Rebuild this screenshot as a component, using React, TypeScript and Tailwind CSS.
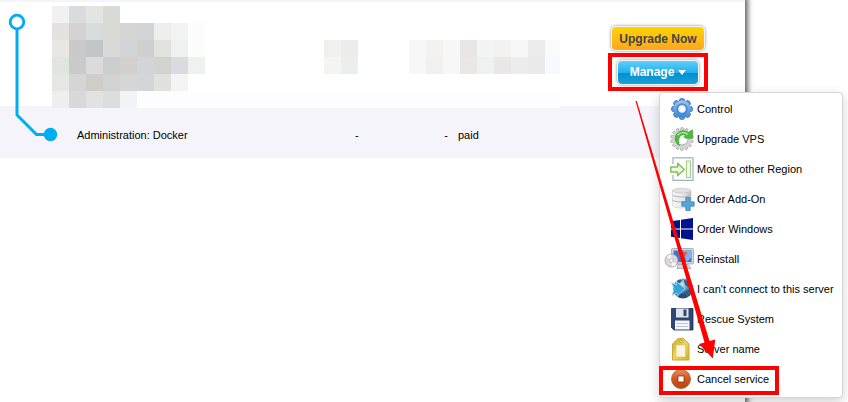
import { ReactNode } from 'react';

const CELL = 17;

// [column, row, colour]
const redacted: [number, number, string][] = [
  [0, 0, '#f1f1f1'], [1, 0, '#dadbde'], [2, 0, '#e3e5e3'], [3, 0, '#d8dad6'],
  [0, 1, '#e3e2de'], [1, 1, '#d4d2d3'], [2, 1, '#d9dcda'], [3, 1, '#d9d9d7'], [4, 1, '#d5d5d5'],
  [5, 1, '#d3d4d6'], [6, 1, '#eeeeee'], [7, 1, '#f3f3f3'], [8, 1, '#fcfcfc'],
  [0, 2, '#e8e7e5'], [1, 2, '#c9c9c9'], [2, 2, '#c3c5c7'], [3, 2, '#d9d9d9'], [4, 2, '#d3d4d7'],
  [5, 2, '#cfcfcf'], [6, 2, '#e1e1df'], [7, 2, '#eef1f0'], [8, 2, '#fcfcf9'],
  [0, 3, '#e1e5e1'], [1, 3, '#cacaca'], [2, 3, '#dbdbdb'], [3, 3, '#cbcecd'], [4, 3, '#d3cfce'],
  [5, 3, '#d3d4d7'], [6, 3, '#d1d3d1'], [7, 3, '#dadbde'], [8, 3, '#eff1f0'],
  [0, 4, '#e6e6e4'], [1, 4, '#d5d5d5'], [2, 4, '#cecdca'], [3, 4, '#d2d2d2'], [4, 4, '#d6d6d6'],
  [5, 4, '#d4d5d7'], [6, 4, '#e0e0de'], [7, 4, '#f4f4f4'],
  [0, 5, '#eeeeee'], [1, 5, '#d8d8d8'], [2, 5, '#e2e2e2'], [3, 5, '#dcdedd'], [4, 5, '#f2f3f6'],
  [16, 2, '#f0f0ee'], [17, 2, '#ececec'], [16, 3, '#f4f4f2'], [17, 3, '#eaeeec'],
  [21, 2, '#f7f7f7'], [22, 2, '#f4f2f0'], [23, 2, '#f7f7f7'], [24, 2, '#e8e6e4'], [25, 2, '#f1f4f3'],
  [26, 2, '#f2f2f0'], [27, 2, '#f7f7f7'], [28, 2, '#ebebeb'], [29, 2, '#f9fbfa'],
  [21, 3, '#f7f7f7'], [22, 3, '#f0f0f1'], [23, 3, '#f7f7f7'], [24, 3, '#eae8e6'], [25, 3, '#edf1ef'],
  [26, 3, '#eae8e7'], [27, 3, '#ececec'], [28, 3, '#eaeaea'], [29, 3, '#f7f9fc'],
];

const Redacted = () => (
  <svg className="relative block" width="508" height="102" shapeRendering="crispEdges" aria-hidden="true">
    <rect x={CELL * 5} y={CELL * 5} width="423" height={CELL} fill="#fdfdfd" />
    {redacted.map(([col, row, fill]) => (
      <rect key={`${col}-${row}`} x={col * CELL} y={row * CELL} width={CELL} height={CELL} fill={fill} />
    ))}
  </svg>
);

const Icon = ({ children }: { children: ReactNode }) => (
  <svg className="shrink-0 overflow-visible" width="24" height="24" viewBox="0 0 24 24" aria-hidden="true">
    {children}
  </svg>
);

const teeth = (count: number) => Array.from({ length: count }, (_, i) => (i * 360) / count);

const ControlIcon = () => (
  <Icon>
    <defs>
      <linearGradient id="gear-blue" x1="0" y1="0" x2="0" y2="1">
        <stop offset="0" stopColor="#a3c8ee" />
        <stop offset="0.5" stopColor="#6ba6e2" />
        <stop offset="1" stopColor="#2f86e0" />
      </linearGradient>
    </defs>
    <g fill="#5b97d8" stroke="#3a72b8" strokeWidth="0.9">
      {teeth(8).map((a) => (
        <rect key={a} x="9.3" y="1.5" width="5.4" height="6" rx="2.4" transform={`rotate(${a} 12 12)`} />
      ))}
    </g>
    <circle cx="12" cy="12" r="8.6" fill="url(#gear-blue)" />
    <circle cx="12" cy="12" r="5" fill="none" stroke="#4a88cf" strokeWidth="1.4" />
    <circle cx="12" cy="12" r="3.4" fill="#fff" stroke="#d5e5f6" strokeWidth="0.8" />
  </Icon>
);

const UpgradeIcon = () => (
  <Icon>
    <g fill="#d8d8d8" stroke="#8f8f8f" strokeWidth="0.6">
      {teeth(14).map((a) => (
        <rect key={a} x="10.8" y="0.6" width="2.6" height="5" rx="1" transform={`rotate(${a} 12 12)`} />
      ))}
    </g>
    <circle cx="12" cy="12" r="7.6" fill="#fff" stroke="#d4d4d4" strokeWidth="3.2" />
    <circle cx="12" cy="12" r="6" fill="#fff" stroke="#8d8d8d" strokeWidth="0.7" />
    <path d="M9.500 18.500C4.400 16 3.500 8.500 8.500 5.200c4-2.600 7.600-1.400 9.700.3L22.500 2.800v8.400h-9.300l2.300-2.600c-2-1.400-4.600-.9-5.800 1.200-1.500 2.600-1.200 6 -.2 8.700z" fill="#4fbd3a" stroke="#2f9a28" strokeWidth="0.6" />
    <path d="M7.500 8.200c2.600-3.400 7-3.200 10.300-.8" fill="none" stroke="#a9e69b" strokeWidth="1.500" />
    <circle cx="12.600" cy="13.200" r="3" fill="#fff" />
  </Icon>
);

const MoveIcon = () => (
  <Icon>
    <path d="M3 7V.8h20v22.500H3V18" fill="#fdfefe" stroke="#9db3bd" strokeWidth="1.200" />
    <rect x="16.500" y="4" width="4" height="16.500" fill="#f1f8e8" stroke="#a5cf86" />
    <path d="M.8 10h6.800V6.200l6.700 6.300-6.700 6.300V15H.8z" fill="#eef7e2" stroke="#86bd56" strokeWidth="1.500" strokeLinejoin="round" />
  </Icon>
);

const AddOnIcon = () => (
  <Icon>
    <defs>
      <linearGradient id="disk-grey">
        <stop offset="0" stopColor="#f5f5f5" />
        <stop offset="0.6" stopColor="#e8e8e8" />
        <stop offset="1" stopColor="#bdbdbd" />
      </linearGradient>
    </defs>
    <path d="M2.500 3.500v15c0 3.400 18.500 3.400 18.500 0v-15z" fill="url(#disk-grey)" stroke="#c8c8c8" strokeWidth="0.6" />
    <ellipse cx="11.700" cy="3.600" rx="9.200" ry="2.400" fill="#e2e2e2" stroke="#c0c0c0" strokeWidth="0.6" />
    <path d="M2.500 8c2 2.600 16.500 2.600 18.500 0M2.500 13c2 2.600 16.500 2.600 18.500 0" fill="none" stroke="#b4b4b4" />
    <path d="M15.800 10.500h4.400v4.300h4v4.400h-4v4.300h-4.400v-4.300h-4v-4.400h4z" fill="#55a5d8" stroke="#3580b5" strokeWidth="0.7" />
  </Icon>
);

const WindowsIcon = () => (
  <Icon>
    <path d="M1 4.300 10 3v8.500H1zM11 2.800 23 1v10.500H11zM1 12.500h9V21l-9-1.300zM11 12.500h12V23l-12-1.800z" fill="#00138a" />
  </Icon>
);

const ReinstallIcon = () => (
  <Icon>
    <rect x="1.500" y="1.500" width="22" height="15.500" rx="1" fill="#d2d5da" stroke="#9a9ea5" strokeWidth="0.7" />
    <rect x="3.500" y="3.500" width="18" height="11.500" fill="#3c78cd" />
    <path d="M13 3.500h8.500v7l-5 4.500z" fill="#86b2e8" />
    <path d="M8 17.500h10l3 4H7z" fill="#d4d7db" stroke="#8d9096" strokeWidth="0.6" />
    <path d="m7.500 5 10 .2-5 8z" fill="#e9542c" />
    <circle cx="1.500" cy="13.500" r="6.500" fill="#dcd7e0" stroke="#98939c" strokeWidth="0.7" />
    <path d="M1.500 13.500-3.300 9.800A6 6 0 0 1 1 7.500zM1.500 13.500l4.800 3.600a6 6 0 0 1-4.200 2.400z" fill="#fafafa" />
    <circle cx="1.500" cy="13.500" r="2" fill="#fff" stroke="#a49fa8" strokeWidth="0.7" />
  </Icon>
);

const ConnectIcon = () => (
  <Icon>
    <defs>
      <radialGradient id="globe-blue" cx="0.45" cy="0.3">
        <stop offset="0" stopColor="#d3e6f2" />
        <stop offset="0.6" stopColor="#6796bb" />
        <stop offset="1" stopColor="#284f76" />
      </radialGradient>
    </defs>
    <circle cx="13" cy="11.500" r="10" fill="url(#globe-blue)" />
    <path d="M14 3c4 0 6 3 7 6l-3 1-3-2zM14 15l5-2 2 3-4 4zM8 3l4 0-2 3-4 0z" fill="#2f5f8c" />
    <path d="M1.500 5.500 6.500 8V4.500L15 11.500 7 19.500V16L2 18.500l2-6.500z" fill="#32a4da" stroke="#bfe6f7" strokeWidth="0.7" />
  </Icon>
);

const RescueIcon = () => (
  <Icon>
    <path d="M1.500 1.500h21.500v21.500H4l-2.500-2.500z" fill="#2f4775" stroke="#1d2f55" strokeWidth="0.8" />
    <rect x="6" y="1.500" width="12.500" height="9" fill="#dfe3ea" />
    <rect x="13.500" y="2.500" width="3" height="6.500" fill="#2f4775" />
    <rect x="5" y="13.500" width="14.500" height="9" fill="#f5f6f8" />
    <path d="M6.500 16.500h11.500M6.500 19.500h11.500" stroke="#bcc3cf" />
  </Icon>
);

const NameIcon = () => (
  <Icon>
    <defs>
      <linearGradient id="tag-gold" x1="0" y1="0" x2="1" y2="1">
        <stop offset="0" stopColor="#c9a92c" />
        <stop offset="0.5" stopColor="#eed766" />
        <stop offset="1" stopColor="#d0ab22" />
      </linearGradient>
    </defs>
    <path d="M2.500 7 8 1.500h5.500L19 7v16H2.500z" fill="url(#tag-gold)" stroke="#cbaa2c" />
    <rect x="6" y="8" width="9.500" height="12" fill="#f8f6df" stroke="#d9c14e" strokeWidth="0.6" />
    <circle cx="10.800" cy="4.500" r="1.200" fill="#fff" stroke="#8f7b2a" strokeWidth="0.7" />
  </Icon>
);

const CancelIcon = () => (
  <Icon>
    <defs>
      <linearGradient id="stop-orange" x1="0" y1="0" x2="0" y2="1">
        <stop offset="0" stopColor="#e98f5c" />
        <stop offset="0.5" stopColor="#cf5520" />
        <stop offset="1" stopColor="#b9440f" />
      </linearGradient>
    </defs>
    <circle cx="11" cy="12" r="9.500" fill="url(#stop-orange)" stroke="#b05a30" strokeWidth="0.8" />
    <rect x="8" y="9" width="6" height="6" fill="#fff" stroke="#8f3208" strokeWidth="0.8" />
  </Icon>
);

const menuItems = [
  { label: 'Control', icon: <ControlIcon /> },
  { label: 'Upgrade VPS', icon: <UpgradeIcon /> },
  { label: 'Move to other Region', icon: <MoveIcon /> },
  { label: 'Order Add-On', icon: <AddOnIcon /> },
  { label: 'Order Windows', icon: <WindowsIcon /> },
  { label: 'Reinstall', icon: <ReinstallIcon /> },
  { label: "I can't connect to this server", icon: <ConnectIcon /> },
  { label: 'Rescue System', icon: <RescueIcon /> },
  { label: 'Server name', icon: <NameIcon /> },
  { label: 'Cancel service', icon: <CancelIcon />, highlighted: true },
];

const ManageMenu = () => (
  <ul className="absolute top-[92px] right-[5px] w-[184px] rounded border border-[#d5d5d5] bg-white pt-px pb-[3px] shadow-[0_4px_12px_rgba(0,0,0,0.18)]">
    {menuItems.map((item) => (
      <li key={item.label} className="relative">
        <a href="#" className="flex h-[30px] items-center gap-[3px] pl-[10px] whitespace-nowrap">
          {item.icon}
          {item.label}
        </a>
        {item.highlighted && (
          <span className="pointer-events-none absolute top-[2px] -left-px h-[29px] w-[120px] border-4 border-[#f00]" />
        )}
      </li>
    ))}
  </ul>
);

// Connects a server row with its add-on row
const TreeLine = () => (
  <svg className="absolute top-0 left-0" width="60" height="150" fill="none" stroke="#00aeef" aria-hidden="true">
    <circle cx="17" cy="22" r="6.800" fill="#fff" strokeWidth="2.800" />
    <path d="M17 29v86l19.500 19.500H46" strokeWidth="3" />
    <circle cx="50.500" cy="134.500" r="6.700" fill="#00aeef" stroke="none" />
  </svg>
);

const Arrow = () => (
  <svg className="pointer-events-none absolute top-0 right-0" width="248" height="402" fill="#f00" aria-hidden="true">
    <path d="M35.500 101h1.300L109.500 341l5.800-1.500-2.500 19L99 344l5.500-1.500z" />
  </svg>
);

export default function App() {
  return (
    <div className="relative min-h-screen overflow-hidden bg-white font-['Liberation_Sans',Arial,sans-serif] text-[11px] leading-4 text-black">
      <main className="relative mr-[103px] min-h-screen border-t-2 border-[#f4f4f9] bg-white shadow-[0_0_5px_3px_rgba(0,0,0,0.6)]">
        <table className="w-full table-fixed border-collapse">
          <colgroup>
            <col />
            <col className="w-[68px]" />
            <col className="w-[25px]" />
            <col className="w-[123px]" />
            <col className="w-[174px]" />
          </colgroup>
          <tbody>
            <tr className="h-[104px]">
              <td colSpan={4} className="h-[104px] p-0 align-top">
                <div className="h-[104px] pt-1 pl-[52px]">
                  <Redacted />
                </div>
              </td>
              <td className="p-0 align-top">
                <div className="flex flex-col items-center gap-[2px] pt-6">
                  <button className="h-[25px] w-[94px] rounded-[5px] border border-[#f4f4f4] bg-linear-to-b from-[#ffd400] to-[#fba61c] text-[12px] font-bold text-[#444] shadow-[0_0_3px_rgba(0,0,0,0.5)]">
                    Upgrade Now
                  </button>
                  <div className="flex h-[38px] w-[100px] items-center justify-center border-4 border-[#f00]">
                    <button className="flex h-[25px] w-[82px] items-center justify-center gap-1 rounded-[5px] border border-[#f4f4f4] bg-[linear-gradient(#5fd0fb,#22b0ee_50%,#0090cc_51%,#1ba0dc)] text-[12px] font-bold text-white shadow-[0_0_3px_rgba(0,0,0,0.5)]">
                      Manage
                      <svg width="8" height="5" fill="#fff" aria-hidden="true">
                        <path d="M0 0h8L4 5z" />
                      </svg>
                    </button>
                  </div>
                </div>
              </td>
            </tr>
            <tr className="h-[52px] bg-[#f4f4fa]">
              <td className="p-0 pt-[6px] pl-[77px]">Administration: Docker</td>
              <td className="p-0 pt-[6px]">-</td>
              <td className="p-0 pt-[6px] text-right">-</td>
              <td className="p-0 pt-[6px] pl-[10px]">paid</td>
              <td />
            </tr>
          </tbody>
        </table>
      </main>
      <TreeLine />
      <ManageMenu />
      <Arrow />
    </div>
  );
}
